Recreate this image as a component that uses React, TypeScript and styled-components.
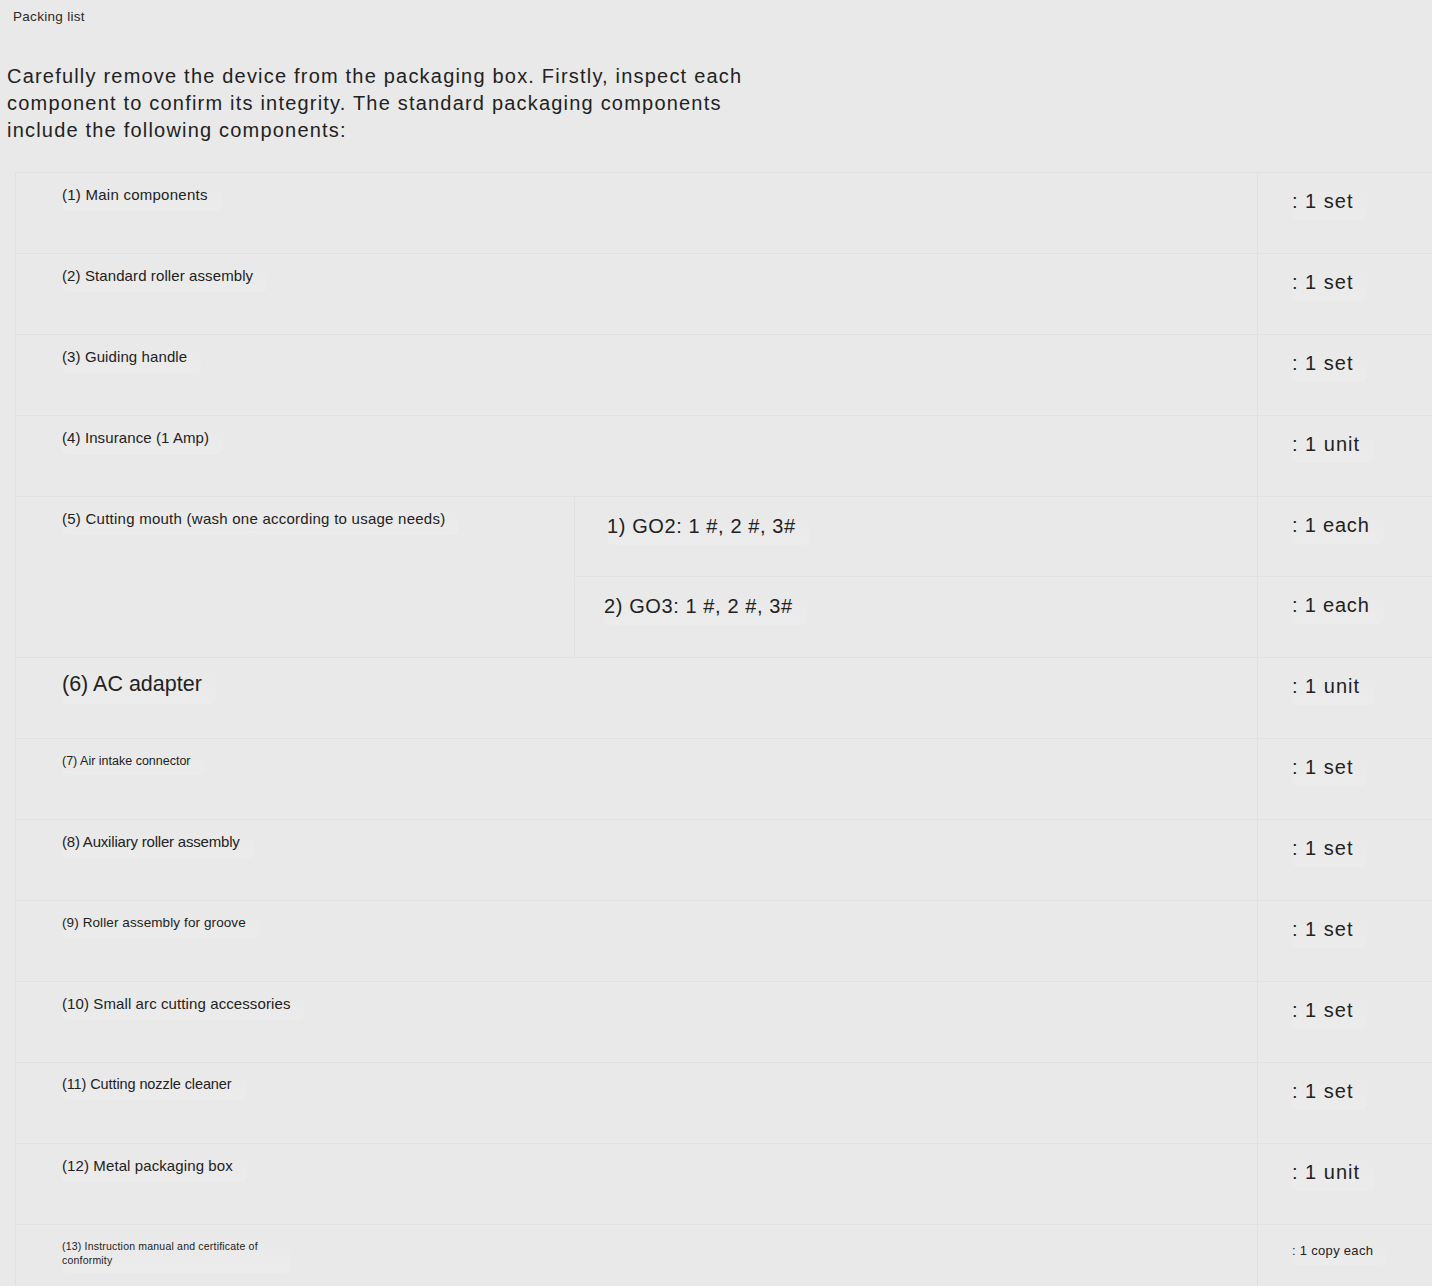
import React from "react"
import styled, { createGlobalStyle } from "styled-components"

const GlobalStyle = createGlobalStyle`
  html, body {
    margin: 0;
    padding: 0;
    background: #e9e9e9;
  }
  body {
    font-family: "Liberation Sans", Arial, sans-serif;
    color: #1f1f1f;
  }
`

const Page = styled.div`
  width: 1432px;
  min-height: 1286px;
  overflow: hidden;
`

const Title = styled.div`
  padding: 9px 0 0 13px;
  font-size: 13.5px;
  line-height: 16px;
  letter-spacing: 0.3px;
  color: #2a2a2a;
`

const Intro = styled.p`
  margin: 38px 0 0 7px;
  width: 782px;
  font-size: 20px;
  line-height: 27px;
  letter-spacing: 1.2px;
  color: #222;
`

const Table = styled.div`
  display: grid;
  grid-template-columns: 558px 683px 1fr;
  grid-auto-rows: 80.9px;
  margin: 28px 0 0 15px;
  border-left: 1px solid #e1e1e1;
`

const Cell = styled.div<{ $span?: number; $rows?: number; $pad: string }>`
  grid-column: span ${({ $span }) => $span ?? 1};
  grid-row: span ${({ $rows }) => $rows ?? 1};
  border-top: 1px solid #e1e1e1;
  border-left: 1px solid #e1e1e1;
  padding: ${({ $pad }) => $pad};
`

const ItemCell = styled(Cell)`
  border-left: none;
`

const Chip = styled.span<{ $size: number; $width?: number; $track?: number }>`
  display: inline-block;
  font-size: ${({ $size }) => $size}px;
  line-height: ${({ $size }) => Math.round($size * 1.3)}px;
  letter-spacing: ${({ $track }) => $track ?? 0.1}px;
  max-width: ${({ $width }) => ($width ? `${$width}px` : "none")};
  padding: 0 14px 6px 0;
  border-radius: 6px;
  background: linear-gradient(to bottom, rgba(240, 240, 240, 0), rgba(236, 236, 236, 0.9));
  color: #222;
`

type Item = {
  label: string
  qty: string
  size?: number
  track?: number
  qtySize?: number
  width?: number
  sub?: string[]
}

const items: Item[] = [
  { label: "(1) Main components", qty: ": 1 set", track: 0.25 },
  { label: "(2) Standard roller assembly", qty: ": 1 set" },
  { label: "(3) Guiding handle", qty: ": 1 set" },
  { label: "(4) Insurance (1 Amp)", qty: ": 1 unit" },
  {
    label: "(5) Cutting mouth (wash one according to usage needs)",
    qty: ": 1 each",
    track: 0.25,
    sub: ["1) GO2: 1 #, 2 #, 3#", "2) GO3: 1 #, 2 #, 3#"],
  },
  { label: "(6) AC adapter", qty: ": 1 unit", size: 21.5, track: 0 },
  { label: "(7) Air intake connector", qty: ": 1 set", size: 12.5, track: 0 },
  { label: "(8) Auxiliary roller assembly", qty: ": 1 set", track: -0.2 },
  { label: "(9) Roller assembly for groove", qty: ": 1 set", size: 13.5 },
  { label: "(10) Small arc cutting accessories", qty: ": 1 set" },
  { label: "(11) Cutting nozzle cleaner", qty: ": 1 set", size: 14.5, track: -0.1 },
  { label: "(12) Metal packaging box", qty: ": 1 unit" },
  {
    label: "(13) Instruction manual and certificate of conformity",
    qty: ": 1 copy each",
    size: 10.5,
    track: 0.2,
    qtySize: 13,
    width: 215,
  },
]

const App = () => {
  return (
    <Page>
      <GlobalStyle />
      <Title>Packing list</Title>
      <Intro>
        Carefully remove the device from the packaging box. Firstly, inspect each
        component to confirm its integrity. The standard packaging components
        include the following components:
      </Intro>
      <Table>
        {items.map((item) => {
          const size = item.size ?? 15
          const top = size < 12 ? "14px" : "12px"
          if (item.sub) {
            return (
              <React.Fragment key={item.label}>
                <ItemCell $rows={2} $pad="12px 0 0 46px">
                  <Chip $size={size} $track={item.track}>
                    {item.label}
                  </Chip>
                </ItemCell>
                {item.sub.map((s) => (
                  <React.Fragment key={s}>
                    <Cell $pad={`16px 0 0 ${s.startsWith("1") ? 32 : 29}px`}>
                      <Chip $size={20} $track={0.6}>
                        {s}
                      </Chip>
                    </Cell>
                    <Cell $pad="15px 0 0 34px">
                      <Chip $size={20} $track={0.8}>
                        {item.qty}
                      </Chip>
                    </Cell>
                  </React.Fragment>
                ))}
              </React.Fragment>
            )
          }
          return (
            <React.Fragment key={item.label}>
              <ItemCell $span={2} $pad={`${top} 0 0 46px`}>
                <Chip $size={size} $width={item.width} $track={item.track}>
                  {item.label}
                </Chip>
              </ItemCell>
              <Cell $pad={item.qtySize ? "16px 0 0 34px" : "15px 0 0 34px"}>
                <Chip $size={item.qtySize ?? 20} $track={item.qtySize ? 0.3 : 1}>
                  {item.qty}
                </Chip>
              </Cell>
            </React.Fragment>
          )
        })}
      </Table>
    </Page>
  )
}

export default App
